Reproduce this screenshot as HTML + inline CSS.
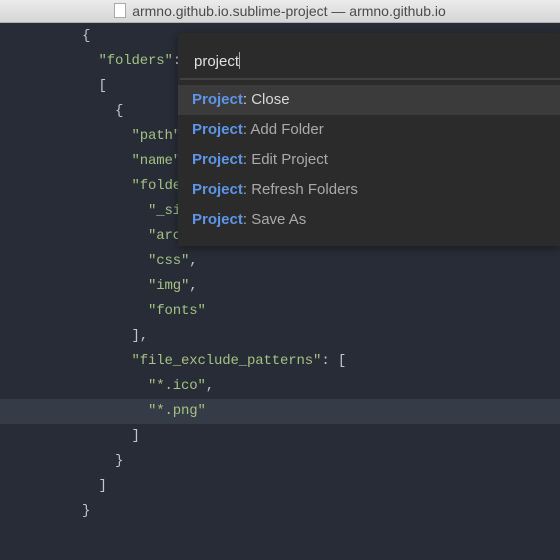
<!DOCTYPE html>
<html><head><style>
body{margin:0;width:560px;height:560px;overflow:hidden;background:#282c36;font-family:"Liberation Sans",sans-serif}
.title{position:absolute;left:0;top:0;width:560px;height:22px;background:linear-gradient(#ececec,#d6d6d6);border-bottom:1px solid #b0b0b0;color:#4a4a4a;font-size:14px;line-height:23px;text-align:center}
.doc{display:inline-block;width:10px;height:13px;background:#fff;border:1px solid #aaa;vertical-align:-2px;margin-right:6px}
.code{position:absolute;left:0;top:24px;font-family:"Liberation Mono",monospace;font-size:14px;letter-spacing:-0.15px;color:#c0c5ce}
.l{height:25px;line-height:25px;white-space:pre;padding-left:82px;width:478px}
.s{color:#a3c283}
.hl{background:#363c47}
.pal{position:absolute;left:178px;top:33px;width:382px;height:213px;background:#2b2b2c;box-shadow:0 2px 8px rgba(0,0,0,.4)}
.inp{position:absolute;left:16px;top:19px;color:#e0e0e0;font-size:15px}
.cur{display:inline-block;width:1px;height:17px;background:#aaa;vertical-align:-3px}
.line{position:absolute;left:2px;right:0;top:45px;height:2px;background:#424242}
.it{position:absolute;left:0;width:382px;height:30px;line-height:30px;padding-left:14px;font-size:15px;color:#aaa;box-sizing:border-box}
.it b{color:#5d95e8}
.sel{background:#3b3b3c;color:#d8d8d8}
</style></head><body>
<div class="title"><span class="doc"></span>armno.github.io.sublime-project — armno.github.io</div>
<div class="code">
<div class="l">{</div>
<div class="l">  <span class="s">"folders"</span>:</div>
<div class="l">  [</div>
<div class="l">    {</div>
<div class="l">      <span class="s">"path"</span></div>
<div class="l">      <span class="s">"name"</span></div>
<div class="l">      <span class="s">"folders"</span></div>
<div class="l">        <span class="s">"_site"</span></div>
<div class="l">        <span class="s">"arc"</span></div>
<div class="l">        <span class="s">"css"</span>,</div>
<div class="l">        <span class="s">"img"</span>,</div>
<div class="l">        <span class="s">"fonts"</span></div>
<div class="l">      ],</div>
<div class="l">      <span class="s">"file_exclude_patterns"</span>: [</div>
<div class="l">        <span class="s">"*.ico"</span>,</div>
<div class="l hl">        <span class="s">"*.png"</span></div>
<div class="l">      ]</div>
<div class="l">    }</div>
<div class="l">  ]</div>
<div class="l">}</div>
</div>
<div class="pal">
<div class="inp">project<span class="cur"></span></div>
<div class="line"></div>
<div class="it sel" style="top:52px"><b>Project</b>: Close</div>
<div class="it" style="top:82px"><b>Project</b>: Add Folder</div>
<div class="it" style="top:112px"><b>Project</b>: Edit Project</div>
<div class="it" style="top:142px"><b>Project</b>: Refresh Folders</div>
<div class="it" style="top:172px"><b>Project</b>: Save As</div>
</div>
</body></html>
